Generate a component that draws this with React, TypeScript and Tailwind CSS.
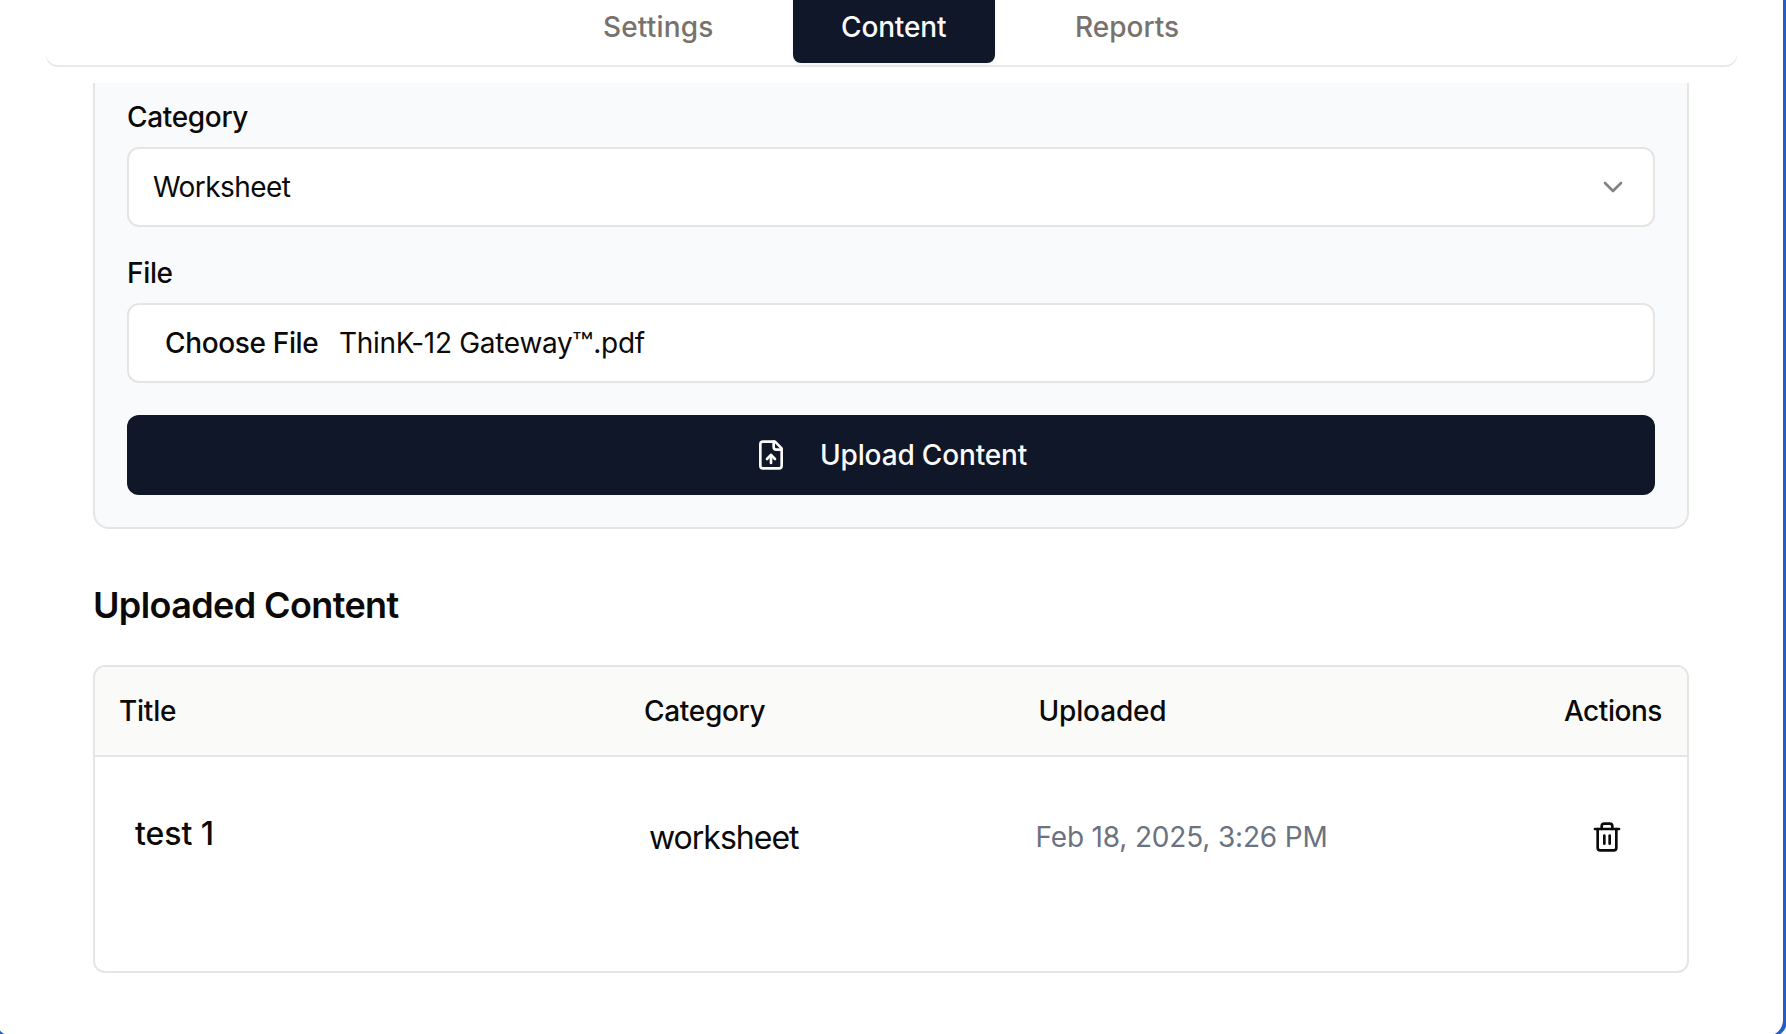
import { ChevronDown, Trash2 } from "lucide-react";

const COLUMNS = "grid grid-cols-[525px_394.5px_1fr_1fr]";

function FileUpIcon() {
  return (
    <svg
      width="32"
      height="32"
      viewBox="0 0 24 24"
      fill="none"
      stroke="currentColor"
      strokeWidth="2"
      strokeLinecap="round"
      strokeLinejoin="round"
    >
      <path d="M15 2H6a2 2 0 0 0-2 2v16a2 2 0 0 0 2 2h12a2 2 0 0 0 2-2V7Z" />
      <path d="M14 2v4a2 2 0 0 0 2 2h4" />
      <path d="M12 12v6" />
      <path d="m15 15-3-3-3 3" />
    </svg>
  );
}

function TabBar() {
  return (
    <nav className="mx-[46px] flex h-[65px] shrink-0 rounded-b-xl bg-white pl-[554px] text-[28px] font-medium leading-10 text-[#78716c] shadow-[0_1px_0_#ebebeb,0_2px_0_#e7e7e7]">
      <div className="-mt-[9px] flex">
        <button className="flex h-[72px] w-[193px] items-center pl-[3px] tracking-[0.16px]">Settings</button>
        <button className="flex h-[72px] w-[202px] items-center rounded-lg bg-[#101728] pl-12 tracking-[-0.14px] text-[#fafaf9] shadow-[0_2px_4px_rgba(0,0,0,0.05)]">
          Content
        </button>
        <button className="flex h-[72px] items-center pl-20">Reports</button>
      </div>
    </nav>
  );
}

function UploadForm() {
  return (
    <section className="rounded-b-2xl border-2 border-t-0 border-[#e5e5e4] bg-[#f9fafc] px-8 pb-8 pt-3.5">
      <label className="block text-[28px] font-medium leading-10 tracking-[-0.33px]">Category</label>
      <div className="mt-2.5 flex h-20 items-center justify-between rounded-xl border-2 border-[#e7e5e4] bg-white pl-6 pr-6 text-[28px] tracking-[-0.58px]">
        <span>Worksheet</span>
        <ChevronDown size={32} className="opacity-50" />
      </div>
      <label className="mt-[26px] block text-[28px] font-medium leading-10 tracking-[-0.34px]">File</label>
      <div className="mt-2.5 flex h-20 items-center rounded-xl border-2 border-[#e7e5e4] bg-white pl-9 text-[28px]">
        <span className="w-[174px] whitespace-nowrap font-medium tracking-[-0.35px]">Choose File</span>
        <span className="tracking-[-0.3px]">
          ThinK-12 Gateway<span className="mx-[2px] inline-block scale-x-125">™</span>.pdf
        </span>
      </div>
      <button className="mt-8 flex h-20 w-full items-center rounded-xl bg-[#101728] pl-[628px] text-[28px] font-medium tracking-[-0.16px] text-[#fafaf9]">
        <FileUpIcon />
        <span className="ml-[33px]">Upload Content</span>
      </button>
    </section>
  );
}

function ContentTable() {
  return (
    <div className="mt-[34px] h-[308px] overflow-hidden rounded-xl border-2 border-[#e5e5e4]">
      <div className={`${COLUMNS} h-[90px] items-center border-b-2 border-[#e5e5e4] bg-[#fafaf9] text-[28px] font-medium`}>
        <span className="pl-6 tracking-[-0.24px]">Title</span>
        <span className="pl-6 tracking-[-0.3px]">Category</span>
        <span className="pl-6 tracking-[-0.16px]">Uploaded</span>
        <span className="pr-[25px] text-right tracking-[-0.45px]">Actions</span>
      </div>
      <div className={`${COLUMNS} h-40 items-center`}>
        <span className="pb-1.5 pl-10 text-[32px] font-medium tracking-[-0.07px]">test 1</span>
        <span className="pl-[29px] pt-0.5 text-[32px] tracking-[-1px]">worksheet</span>
        <span className="whitespace-nowrap pl-[21px] text-[28px] tracking-[-0.17px] text-[#6b7280]">
          Feb 18, 2025, 3:26 PM
        </span>
        <button className="flex justify-end pr-16">
          <Trash2 size={32} />
        </button>
      </div>
    </div>
  );
}

export default function App() {
  return (
    <div className="h-[1034px] w-[1786px] overflow-hidden bg-white font-['Inter',sans-serif] text-[#0c0a09]">
      <div className="h-[1037px] w-[1787px] rounded-br-[16px] bg-[#265bc8]">
        <div className="-ml-1 flex h-[1036px] w-[1787px] flex-col rounded-b-[16px] bg-white pl-1">
          <TabBar />
          <main className="ml-[93px] mt-[18px] w-[1596px]">
            <UploadForm />
            <h2 className="mt-[50px] text-[36px] font-semibold leading-[52px] tracking-[-0.62px]">Uploaded Content</h2>
            <ContentTable />
          </main>
        </div>
      </div>
    </div>
  );
}
